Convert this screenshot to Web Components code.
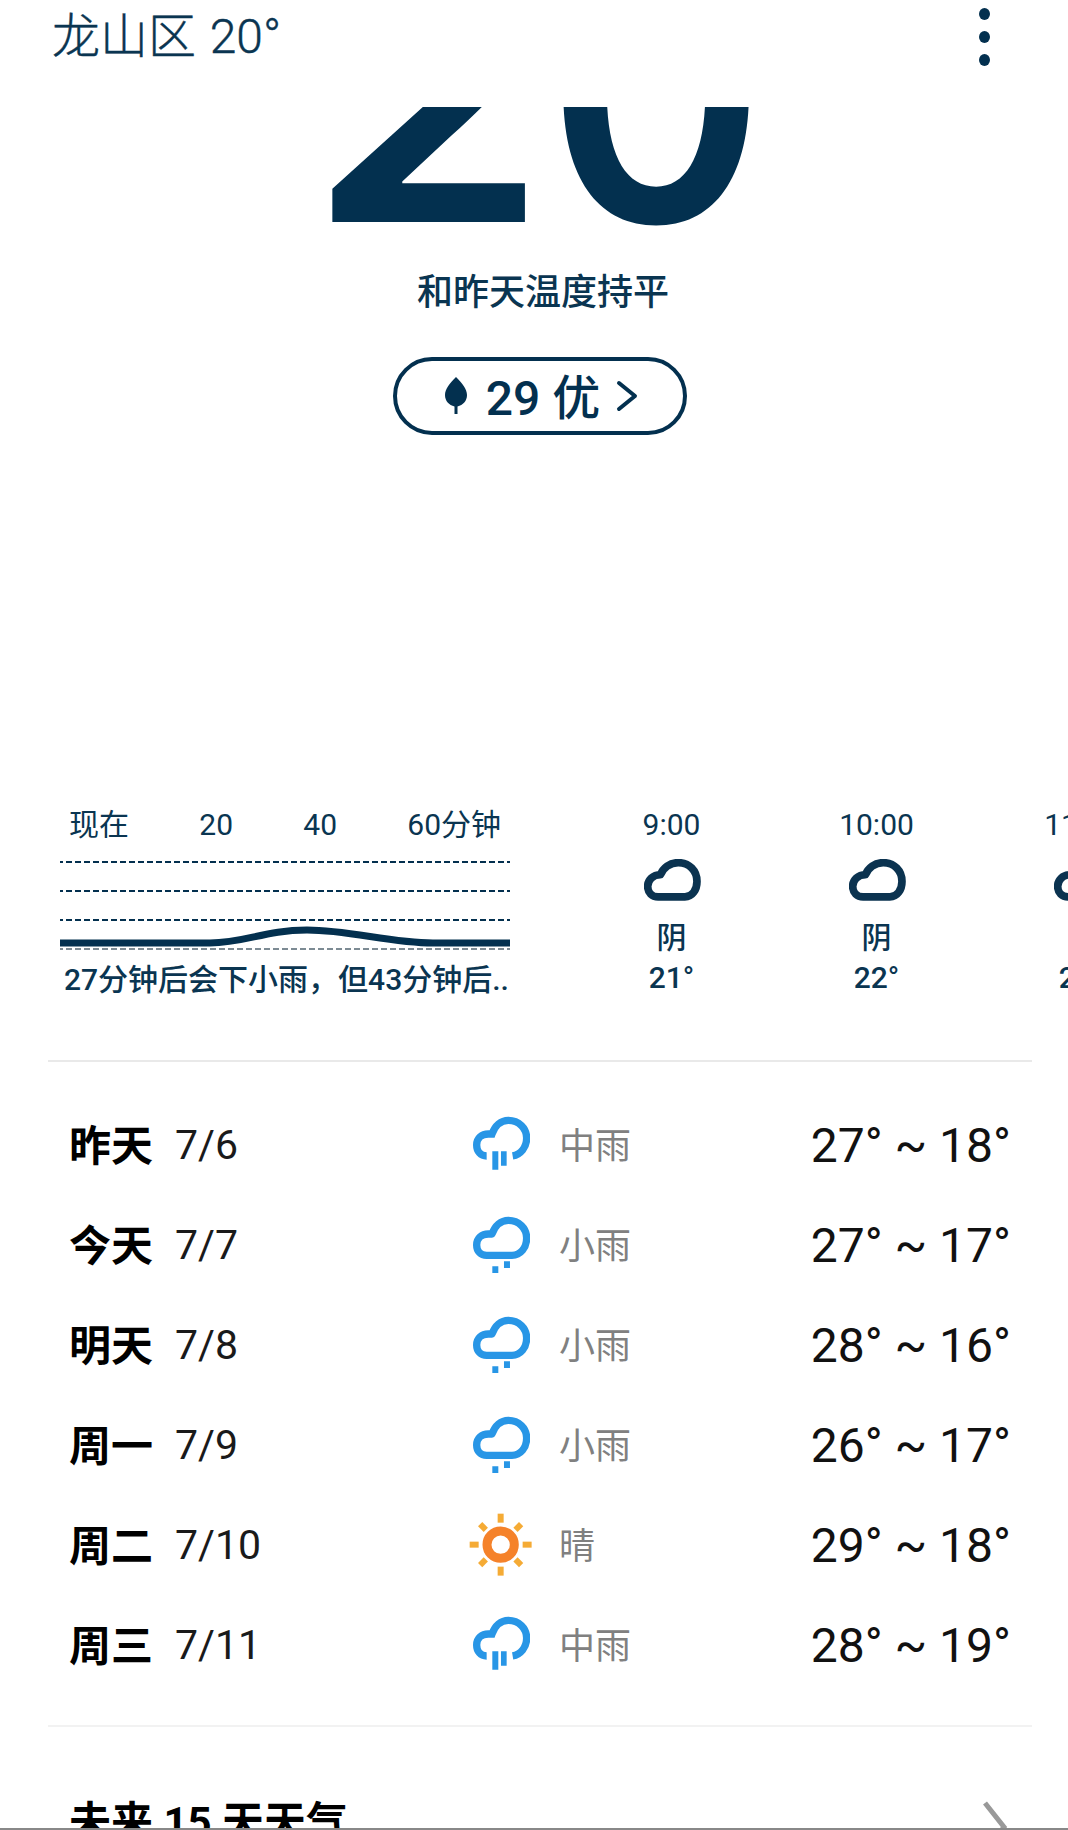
<!DOCTYPE html>
<html lang="zh-CN"><head><meta charset="utf-8"><title>天气</title>
<style>
html,body{margin:0;padding:0;background:#fff;overflow:hidden}
body{width:1068px;height:1830px;font-family:Roboto,"Noto Sans CJK SC",sans-serif;color:#03304f}
</style></head><body>
<wx-app></wx-app>
<template id="app-t"><style>
:host{display:flex;flex-direction:column;width:1068px;height:1830px;overflow:hidden;background:#fff}
.now{display:flex;padding-left:60px;margin-top:370px;height:195px;overflow:hidden;flex:none}
.hours{display:flex;margin-left:59px;flex:none}
.rule{height:2px;margin:60px 36px 0 48px;background:#e9e9e9;flex:none}
.rule.b{margin:30px 36px 0 48px;background:#f2f2f2}
.days{display:block;margin-top:33px}
</style>
<wx-header></wx-header><wx-hero></wx-hero>
<div class="now"><wx-minutes></wx-minutes><div class="hours">
<wx-hour time="9:00" cond="阴" temp="21°"></wx-hour>
<wx-hour time="10:00" cond="阴" temp="22°"></wx-hour>
<wx-hour time="11:00" cond="阴" temp="22°"></wx-hour>
</div></div>
<div class="rule"></div>
<div class="days">
<wx-day day="昨天" date="7/6" icon="rain-m" cond="中雨" temp="27° ~ 18°"></wx-day>
<wx-day day="今天" date="7/7" icon="rain-s" cond="小雨" temp="27° ~ 17°"></wx-day>
<wx-day day="明天" date="7/8" icon="rain-s" cond="小雨" temp="28° ~ 16°"></wx-day>
<wx-day day="周一" date="7/9" icon="rain-s" cond="小雨" temp="26° ~ 17°"></wx-day>
<wx-day day="周二" date="7/10" icon="sun" cond="晴" temp="29° ~ 18°"></wx-day>
<wx-day day="周三" date="7/11" icon="rain-m" cond="中雨" temp="28° ~ 19°"></wx-day>
</div>
<div class="rule b"></div>
<wx-more></wx-more>
</template>
<script>
const ICONS={
 cloud:['133 208 170 125',57,'<path d="M175 321H255C277 321 291 300 291 275C291 243 268 219 235 219C210 219 190 235 182 255C160 255 144 270 144 290C144 308 157 321 175 321Z" fill="none" stroke="#0b3350" stroke-width="23" stroke-linejoin="round"/>'],
 'rain-m':['66 46 172 175',57.3,'<path d="M110 166C92 166 80 152 80 133C80 113 95 100 115 100H126C135 75 153 59 175 59C207 59 230 83 230 112C230 140 212 162 188 166" fill="none" stroke="#2896e6" stroke-width="22"/><path d="M127 152h18v55h-18zM153 152h17v43h-17z" fill="#2896e6"/>'],
 'rain-s':['66 46 172 175',57.3,'<path d="M110 164C92 164 80 152 80 133C80 113 95 100 115 100H126C135 75 153 59 175 59C207 59 230 83 230 112C230 141 212 164 186 164Z" fill="none" stroke="#2896e6" stroke-width="22" stroke-linejoin="round"/><path d="M127 197h18v20h-18zM162 182h18v20h-18z" fill="#2896e6"/>'],
 sun:['58 38 190 190',63.3,'<circle cx="153" cy="133" r="41" fill="none" stroke="#f5822a" stroke-width="27"/>'+[0,45,90,135,180,225,270,315].map(a=>`<rect x="144" y="40" width="18" height="${a%90?24:27}" fill="#f5ab35" transform="rotate(${a} 153 133)${a%90?' translate(0 6)':''}"/>`).join('')]
};
function tpl(css,html){return `<style>${css}</style>${html}`}
class Base extends HTMLElement{
 connectedCallback(){if(this.shadowRoot)return;const r=this.attachShadow({mode:'open'});r.innerHTML=this.render()}
 a(n){return this.getAttribute(n)||''}
}
class WxApp extends HTMLElement{connectedCallback(){if(this.shadowRoot)return;this.attachShadow({mode:'open'}).appendChild(document.getElementById('app-t').content.cloneNode(true))}}
class WxIcon extends Base{render(){const[v,w,c]=ICONS[this.a('name')];const [,,vw,vh]=v.split(' ').map(Number);
 return tpl(':host{display:block;line-height:0}',`<svg width="${w}" height="${w*vh/vw}" viewBox="${v}">${c}</svg>`)}}
class WxHeader extends Base{render(){return tpl(`:host{display:flex;justify-content:space-between;height:107px;flex:none;padding:0 78px 0 52px;box-sizing:border-box}
.t{font-size:48px;line-height:74px;color:#0a3551;font-weight:300;-webkit-text-stroke:.4px #0a3551;word-spacing:2px}
.k{display:flex;flex-direction:column;gap:11px;padding-top:8px}.k i{display:block;width:11px;height:12px;border-radius:50%;background:#03304f}`,
`<div class="t">龙山区 20°</div><div class="k"><i></i><i></i><i></i></div>`)}}
class WxHero extends Base{render(){return tpl(`:host{display:flex;flex-direction:column;align-items:center;flex:none;padding-left:10px}
.n{height:123px;width:100%;box-sizing:border-box;padding-left:12px;overflow:hidden;display:flex;justify-content:center;align-items:flex-end}
.n span{display:block;font-family:Inter,sans-serif;font-weight:600;font-size:355px;line-height:355px;margin-bottom:-41px;flex:none;color:#03304f}
.n .a{transform:scaleX(1.09)}.n .b{transform:scaleX(.935)}
.s{font-size:36px;line-height:50px;margin-top:38px;padding-left:8px;font-weight:500;color:#0a3551}`,
`<div class="n"><span class="a">2</span><span class="b">0</span></div><div class="s">和昨天温度持平</div><wx-aqi></wx-aqi>`)}}
class WxAqi extends Base{render(){return tpl(`:host{display:flex;align-items:center;justify-content:center;gap:16px;width:294px;height:78px;box-sizing:border-box;border:4px solid #03304f;border-radius:39px;margin:39px 0 0 2px;padding-left:2px}
.v{font-size:48px;font-weight:500;line-height:1;white-space:pre;padding-top:5px;margin-left:2px}`,
`<svg width="24" height="38" viewBox="0 0 24 38"><path d="M12 0C6 6 1 12 1 18C1 24 5 28 10.500 29.500V37H13.500V29.500C19 28 23 24 23 18C23 12 18 6 12 0Z" fill="#03304f"/></svg><span class="v">29 优</span><svg width="22" height="32" viewBox="0 0 22 32"><path d="M3 3L19 16L3 29" fill="none" stroke="#03304f" stroke-width="4" stroke-linecap="round" stroke-linejoin="round"/></svg>`)}}
class WxMinutes extends Base{render(){const d=[12,41,70,99];return tpl(`:host{display:block;width:450px;flex:none}
.l{display:flex;justify-content:space-between;padding:0 9px;font-size:30px;line-height:40px;color:#0a3551}
svg{display:block;margin-top:5px}
.c{font-size:30px;line-height:40px;padding-left:4px;font-weight:500;white-space:nowrap;color:#0a3551}`,
`<div class="l"><span>现在</span><span>20</span><span>40</span><span>60分钟</span></div>
<svg width="450" height="110" viewBox="0 0 450 110">${d.map((y,i)=>`<path d="M-3 ${y}H453" stroke="${i==3?'#7d8b94':'#03304f'}" stroke-width="2" stroke-dasharray="6 3"/>`).join('')}
<path d="M0 93H150C185 93 205 80 247 80C290 80 330 93 373 93H450" fill="none" stroke="#03304f" stroke-width="7"/></svg>
<div class="c">27分钟后会下小雨，但43分钟后..</div>`)}}
class WxHour extends Base{render(){return tpl(`:host{display:flex;flex-direction:column;align-items:center;width:205px;flex:none;font-size:30px;line-height:40px;color:#0a3551}
wx-icon{margin:14px 0 17px 2px}.b{font-weight:500}`,
`<div>${this.a('time')}</div><wx-icon name="cloud"></wx-icon><div class="b">${this.a('cond')}</div><div class="b">${this.a('temp')}</div>`)}}
class WxDay extends Base{render(){return tpl(`:host{display:grid;grid-template-columns:105px 291px 93px 1fr;align-items:center;height:100px;margin:0 57px 0 70px;color:#000}
.d{font-size:42px;font-weight:700;margin-bottom:6px;margin-left:-1px}.n{font-size:41px;font-weight:400;color:#1a1a1a}
.i{display:flex;justify-content:center;width:62px;margin-left:4px}
.c{font-size:36px;color:#808080;margin-bottom:4px}
.r{display:flex;justify-content:space-between;align-items:center}
.t{font-size:48px;white-space:nowrap;color:#111}`,
`<div class="d">${this.a('day')}</div><div class="n">${this.a('date')}</div><div class="i"><wx-icon name="${this.a('icon')}"></wx-icon></div><div class="r"><span class="c">${this.a('cond')}</span><span class="t">${this.a('temp')}</span></div>`)}}
class WxMore extends Base{render(){return tpl(`:host{display:flex;justify-content:space-between;height:101px;flex:none;overflow:hidden;padding:0 60px 0 70px;border-bottom:2px solid #888;box-sizing:content-box}
.t{font-size:42px;font-weight:700;line-height:56px;margin-top:68px;color:#000;margin-left:-1px}
svg{margin-top:74px}`,
`<div class="t">未来 15 天天气</div><svg width="26" height="50" viewBox="0 0 26 50"><path d="M3 2L22 26L3 50" fill="none" stroke="#999" stroke-width="5"/></svg>`)}}
customElements.define('wx-icon',WxIcon);customElements.define('wx-header',WxHeader);customElements.define('wx-hero',WxHero);customElements.define('wx-aqi',WxAqi);customElements.define('wx-minutes',WxMinutes);customElements.define('wx-hour',WxHour);customElements.define('wx-day',WxDay);customElements.define('wx-more',WxMore);customElements.define('wx-app',WxApp);
</script></body></html>
